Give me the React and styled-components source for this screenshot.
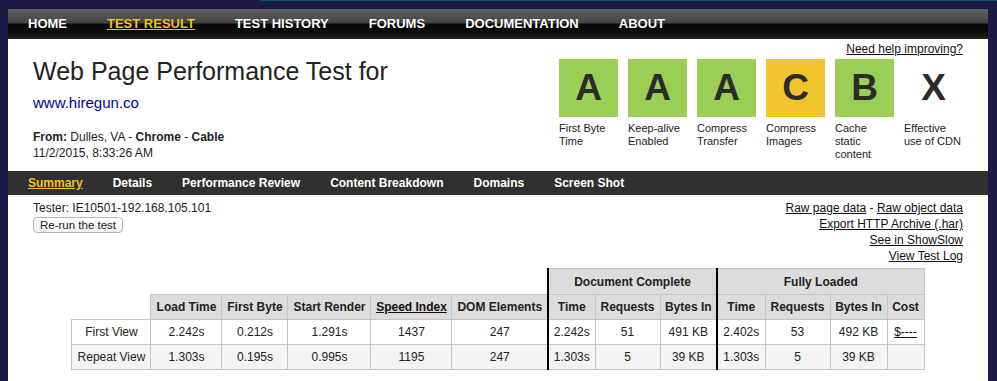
import React from "react";
import styled, { createGlobalStyle } from "styled-components";

const GlobalStyle = createGlobalStyle`
  html, body { margin: 0; padding: 0; }
  body {
    background: linear-gradient(to right, #1c1a47 260px, #0d5269 260px) 0 0 / 100% 1px no-repeat #1c1a47;
    font-family: "Liberation Sans", Arial, sans-serif;
    color: #222;
  }
  * { box-sizing: border-box; }
`;

const Page = styled.div`
  margin: 9px 0 0 8px;
  width: 980px;
  min-height: 372px;
  background: #fff;
`;

const TopNav = styled.nav`
  display: flex;
  gap: 40px;
  height: 30px;
  padding: 0 20px;
  align-items: center;
  background: linear-gradient(
    #606060 0%,
    #454545 45%,
    #070707 52%,
    #0c0c0c 75%,
    #222 100%
  );
`;

const NavLink = styled.a`
  font-size: 13px;
  font-weight: bold;
  line-height: 30px;
  color: ${(p) => (p.$active ? "#f2c21a" : "#fff")};
  text-decoration: ${(p) => (p.$active ? "underline" : "none")};
  text-shadow: 0 1px 1px rgba(0, 0, 0, 0.7);
  white-space: nowrap;
`;

const Header = styled.header`
  display: flex;
  justify-content: space-between;
  height: 132px;
  padding: 0 25px;
`;

const HeaderLeft = styled.div`
  display: flex;
  flex-direction: column;
`;

const Title = styled.h1`
  margin: 17px 0 0;
  font-size: 25px;
  font-weight: normal;
  line-height: 30px;
  color: #222;
`;

const SiteUrl = styled.a`
  margin-top: 8px;
  font-size: 15px;
  line-height: 18px;
  color: #00009a;
  text-decoration: none;
`;

const Meta = styled.div`
  margin-top: 17px;
  font-size: 12px;
  line-height: 16px;
  color: #222;
`;

const HeaderRight = styled.div`
  display: flex;
  flex-direction: column;
  align-items: flex-end;
`;

const HelpLink = styled.a`
  margin-top: 3px;
  font-size: 12px;
  line-height: 14px;
  color: #111;
  text-decoration: underline;
`;

const Grades = styled.div`
  display: flex;
  gap: 10px;
  margin-top: 3px;
`;

const Grade = styled.div`
  width: 59px;
`;

const GradeBox = styled.div`
  height: 58px;
  display: flex;
  align-items: center;
  justify-content: center;
  background: ${(p) => p.$color};
  font-size: 37px;
  font-weight: bold;
  color: #2b2b2b;
`;

const GradeLabel = styled.div`
  margin-top: 5px;
  font-size: 11px;
  line-height: 13px;
  color: #222;
`;

const SubNav = styled.nav`
  display: flex;
  gap: 30px;
  height: 24px;
  padding: 0 20px;
  align-items: center;
  background: #303030;
`;

const SubLink = styled.a`
  font-size: 12px;
  font-weight: bold;
  line-height: 24px;
  color: ${(p) => (p.$active ? "#f2c21a" : "#fff")};
  text-decoration: ${(p) => (p.$active ? "underline" : "none")};
  white-space: nowrap;
`;

const Info = styled.section`
  display: flex;
  justify-content: space-between;
  padding: 5px 25px 0;
`;

const InfoLeft = styled.div`
  display: flex;
  flex-direction: column;
  align-items: flex-start;
  font-size: 12px;
  line-height: 16px;
`;

const RerunButton = styled.button`
  margin-top: 1px;
  height: 16px;
  padding: 0 6px;
  font-family: inherit;
  font-size: 11.5px;
  line-height: 14px;
  color: #222;
  border: 1px solid #b5b5b5;
  border-radius: 4px;
  background: linear-gradient(#fff, #f1f1f1);
`;

const Links = styled.div`
  text-align: right;
  font-size: 12px;
  line-height: 16px;
  color: #222;
`;

const TextLink = styled.a`
  color: #111;
  text-decoration: underline;
`;

const Table = styled.table`
  margin: 4px auto 0;
  border-collapse: collapse;
  table-layout: fixed;
  width: 852px;
  font-size: 12px;
  color: #222;
`;

const HeadCell = styled.th`
  height: ${(p) => (p.$tall ? "26px" : "25px")};
  padding: 0 2px;
  font-weight: bold;
  text-align: center;
  white-space: nowrap;
  background: ${(p) => (p.$blank ? "transparent" : "#dcdcdc")};
  border: ${(p) => (p.$blank ? "none" : "1px solid #c4c4c4")};
  border-left: ${(p) => (p.$thick ? "2px solid #000" : undefined)};
`;

const Cell = styled.td`
  height: 25px;
  padding: 0 2px;
  text-align: center;
  white-space: nowrap;
  border: 1px solid #c4c4c4;
  border-left: ${(p) => (p.$thick ? "2px solid #000" : undefined)};
  background: ${(p) => (p.$alt ? "#f3f3f3" : "#fff")};
`;

const HeadLink = styled.a`
  color: #111;
  text-decoration: underline;
`;

const grades = [
  { letter: "A", color: "#9bce55", label: "First Byte Time" },
  { letter: "A", color: "#9bce55", label: "Keep-alive Enabled" },
  { letter: "A", color: "#9bce55", label: "Compress Transfer" },
  { letter: "C", color: "#f2c42c", label: "Compress Images" },
  { letter: "B", color: "#9bce55", label: "Cache static content" },
  { letter: "X", color: "#fff", label: "Effective use of CDN" },
];

const widths = [79, 71, 66, 83, 81, 96, 47, 65, 57, 48, 65, 57, 37];

const rows = [
  {
    label: "First View",
    values: ["2.242s", "0.212s", "1.291s", "1437", "247", "2.242s", "51", "491 KB", "2.402s", "53", "492 KB"],
    cost: true,
  },
  {
    label: "Repeat View",
    values: ["1.303s", "0.195s", "0.995s", "1195", "247", "1.303s", "5", "39 KB", "1.303s", "5", "39 KB"],
    cost: false,
  },
];

const colHeads = [
  "Load Time",
  "First Byte",
  "Start Render",
  "Speed Index",
  "DOM Elements",
  "Time",
  "Requests",
  "Bytes In",
  "Time",
  "Requests",
  "Bytes In",
  "Cost",
];

export default function App() {
  return (
    <>
      <GlobalStyle />
      <Page>
        <TopNav>
          <NavLink>HOME</NavLink>
          <NavLink $active>TEST RESULT</NavLink>
          <NavLink>TEST HISTORY</NavLink>
          <NavLink>FORUMS</NavLink>
          <NavLink>DOCUMENTATION</NavLink>
          <NavLink>ABOUT</NavLink>
        </TopNav>

        <Header>
          <HeaderLeft>
            <Title>Web Page Performance Test for</Title>
            <SiteUrl>www.hiregun.co</SiteUrl>
            <Meta>
              <b>From:</b> Dulles, VA - <b>Chrome</b> - <b>Cable</b>
              <br />
              11/2/2015, 8:33:26 AM
            </Meta>
          </HeaderLeft>
          <HeaderRight>
            <HelpLink>Need help improving?</HelpLink>
            <Grades>
              {grades.map((g, i) => (
                <Grade key={i}>
                  <GradeBox $color={g.color}>{g.letter}</GradeBox>
                  <GradeLabel>{g.label}</GradeLabel>
                </Grade>
              ))}
            </Grades>
          </HeaderRight>
        </Header>

        <SubNav>
          <SubLink $active>Summary</SubLink>
          <SubLink>Details</SubLink>
          <SubLink>Performance Review</SubLink>
          <SubLink>Content Breakdown</SubLink>
          <SubLink>Domains</SubLink>
          <SubLink>Screen Shot</SubLink>
        </SubNav>

        <Info>
          <InfoLeft>
            <span>Tester: IE10501-192.168.105.101</span>
            <RerunButton>Re-run the test</RerunButton>
          </InfoLeft>
          <Links>
            <TextLink>Raw page data</TextLink> - <TextLink>Raw object data</TextLink>
            <br />
            <TextLink>Export HTTP Archive (.har)</TextLink>
            <br />
            <TextLink>See in ShowSlow</TextLink>
            <br />
            <TextLink>View Test Log</TextLink>
          </Links>
        </Info>

        <Table>
          <colgroup>
            {widths.map((w, i) => (
              <col key={i} style={{ width: w }} />
            ))}
          </colgroup>
          <thead>
            <tr>
              <HeadCell $blank $tall colSpan={6} />
              <HeadCell $tall $thick colSpan={3}>
                Document Complete
              </HeadCell>
              <HeadCell $tall $thick colSpan={4}>
                Fully Loaded
              </HeadCell>
            </tr>
            <tr>
              <HeadCell $blank />
              {colHeads.map((h, i) => (
                <HeadCell key={i} $thick={i === 5 || i === 8}>
                  {h === "Speed Index" ? <HeadLink>{h}</HeadLink> : h}
                </HeadCell>
              ))}
            </tr>
          </thead>
          <tbody>
            {rows.map((r, ri) => (
              <tr key={ri}>
                <Cell $alt={ri === 1}>{r.label}</Cell>
                {r.values.map((v, i) => (
                  <Cell key={i} $alt={ri === 1} $thick={i === 5 || i === 8}>
                    {v}
                  </Cell>
                ))}
                <Cell $alt={ri === 1}>{r.cost ? <HeadLink>$----</HeadLink> : null}</Cell>
              </tr>
            ))}
          </tbody>
        </Table>
      </Page>
    </>
  );
}
